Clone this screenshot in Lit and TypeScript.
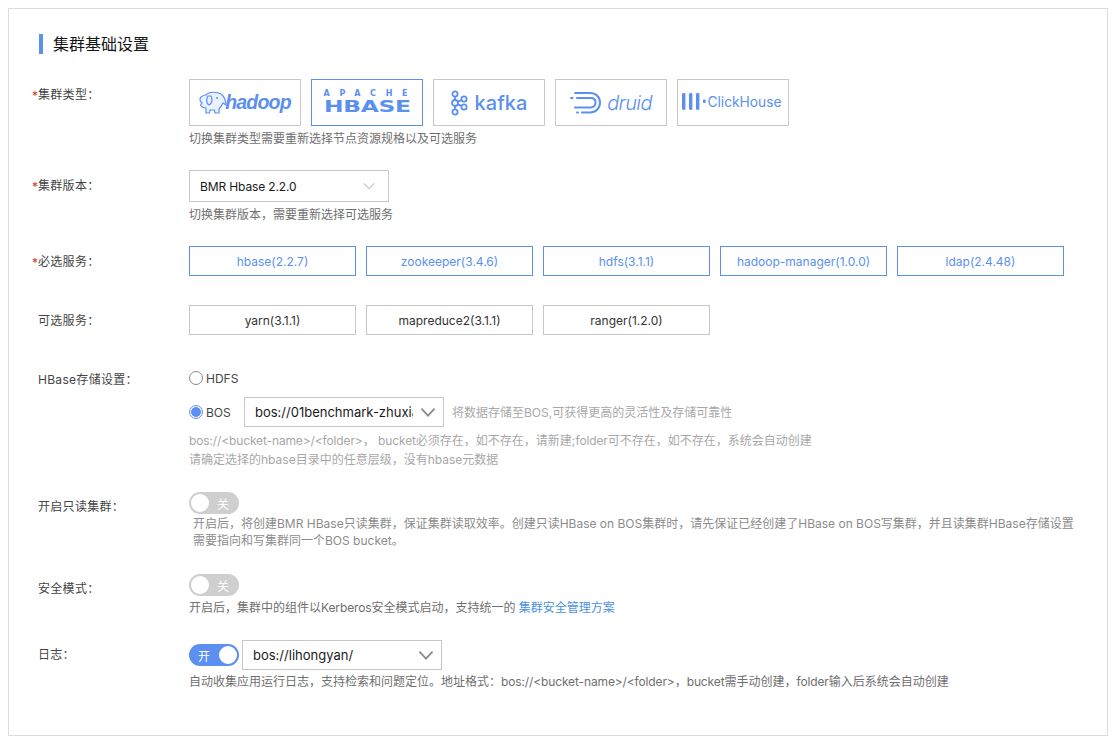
import { LitElement, html, css, svg } from "lit";
import { customElement } from "lit/decorators.js";

const chevron = (size = 22, w = 1.6, color = "#8a8a8a") => html`<svg class="chev" width=${size} height=${size * 0.6} viewBox="0 0 22 13" fill="none" stroke=${color} stroke-width=${w}><path d="M3 2 L11 10.5 L19 2"/></svg>`;

const elephant = svg`<svg class="ele" width="28" height="24" viewBox="0 0 28 24" fill="#eaf1fd" stroke="#5b8ff0" stroke-width="1.2" stroke-linejoin="round"><path d="M7 4 C10 0.500 18 0.500 22 3 C25 5 27 10 27 14 L24 12 C23 14 22 16 20 18 L20 22 L16 22 L15.500 19 L11 19 L10.500 22 L7 22 L7 17 C4 17 2.500 16 1.500 14 L3 12 C1 11 0.500 8 1.500 6.500 C3 5 5 4 7 4 Z"/><path d="M9 5 C7 8 7 12 10 14 C13 13 14 8 12 5 Z" fill="none"/><circle cx="18" cy="7" r="1" fill="#5b8ff0" stroke="none"/></svg>`;

@customElement("app-root")
export class AppRoot extends LitElement {
  static styles = css`
    :host {
      display: block;
      width: 1113px;
      height: 745px;
      box-sizing: border-box;
      padding: 8px 5px 9px 8px;
      background: #fff;
      font-family: "Inter", "Noto Sans CJK SC", sans-serif;
      font-size: 12px;
      color: #333;
    }
    * { box-sizing: border-box; }
    .card {
      height: 728px;
      border: 1px solid #dcdcdc;
      padding: 25px 0 0 23px;
    }
    .title {
      display: flex;
      align-items: center;
      height: 20px;
      margin-left: 7px;
      font-size: 16px;
      color: #151515;
      gap: 10px;
      margin-bottom: 25px;
    }
    .title i { width: 4px; height: 20px; background: #5b8ff0; display: block; }
    .title span { position: relative; top: -1px; }
    .row { display: grid; grid-template-columns: 157px 1fr; }
    .label {
      position: relative;
      padding-left: 6px;
      line-height: 18px;
      color: #444;
      letter-spacing: .3px;
    }
    .req::before {
      content: "*";
      position: absolute;
      left: 0;
      color: #d0342c;
      font-size: 12px;
    }
    .t6 { padding-top: 6px; }
    .t7 { padding-top: 7px; }
    .t7.req::before { top: 8px; }
    .l30 { line-height: 30px; padding-top: 1px; height: 30px; }
    .l30.req::before { top: 2px; }
    .flex { display: flex; align-items: center; }
    .gap10 { gap: 10px; }
    .logo {
      width: 112px;
      height: 47px;
      border: 1px solid #c8c8c8;
      display: flex;
      align-items: center;
      justify-content: center;
      color: #5b8ff0;
      overflow: hidden;
    }
    .logo.on { border-color: #5b8ff0; }
    .logo.nudge { padding: 0 2px 2px 0; }
    .ele { margin-right: -2px; flex: none; }
    .hadoop { font: italic 700 19.500px "Liberation Sans", sans-serif; letter-spacing: -.8px; }
    .hbase { display: flex; flex-direction: column; width: 85px; font-family: "DejaVu Sans", sans-serif; margin: -1px 0 0 -2px; }
    .hbase small { font-size: 8px; line-height: 8px; font-weight: 700; letter-spacing: 9.700px; white-space: nowrap; }
    .hbase b { font-size: 16px; line-height: 15px; font-weight: 700; transform: scaleX(1.46); transform-origin: left; display: block; width: 58px; letter-spacing: -.2px; margin-top: 1px; }
    .kafka { font: 500 20px "Inter", sans-serif; margin-left: 6px; letter-spacing: .1px; }
    .druid { font: italic 300 20px "Inter", sans-serif; margin-left: 5px; letter-spacing: -.6px; }
    .ch { font: 400 13.800px "Inter", sans-serif; margin-left: 1px; }
    .desc { color: #6f6f6f; line-height: 18px; }
    .hint { color: #a8a8a8; line-height: 19px; }
    .lat { letter-spacing: -.13px; }
    .select {
      height: 32px;
      width: 200px;
      border: 1px solid #c8c8c8;
      display: flex;
      align-items: center;
      justify-content: space-between;
      padding-left: 10px;
      padding-right: 12px;
      color: #1a1a1a;
    }
    .select span { white-space: nowrap; }
    .select.big { font-size: 13px; height: 30px; padding-left: 10px; padding-right: 6px; }
    .select.big span.clip { width: 158px; overflow: hidden; }
    .svc {
      width: 167px;
      height: 30px;
      border: 1px solid #c8c8c8;
      display: flex;
      align-items: center;
      justify-content: center;
      color: #333;
    }
    .svc.on { border-color: #5b8ff0; color: #5b8ff0; }
    .radio {
      width: 14px;
      height: 14px;
      border-radius: 50%;
      border: 1px solid #888;
      display: block;
      flex: none;
    }
    .radio.on { border-color: #5b8ff0; background: radial-gradient(circle, #5b8ff0 0 4.600px, #fff 5.200px); }
    .opt { display: flex; align-items: center; gap: 3px; color: #444; height: 20px; }
    .opt.bos { width: 55px; }
    .bosrow { margin-top: 9px; }
    .aside { margin-left: 8px; }
    .sw {
      width: 50px;
      height: 22px;
      border-radius: 11px;
      background: #cfcfcf;
      display: flex;
      align-items: center;
      justify-content: flex-end;
      padding: 0 10px 0 0;
      color: #fff;
      position: relative;
      flex: none;
    }
    .sw::before {
      content: "";
      position: absolute;
      left: 2px;
      top: 2px;
      width: 18px;
      height: 18px;
      border-radius: 50%;
      background: #fff;
    }
    .sw.on { background: #5b8ff0; justify-content: flex-start; padding: 0 0 0 9px; }
    .sw.on::before { left: 30px; }
    a { color: #4a90e2; text-decoration: none; }
    .r1 { margin-bottom: 22px; }
    .r2 { margin-bottom: 22px; }
    .r3 { margin-bottom: 29px; }
    .r4 { margin-bottom: 33px; }
    .r5 { margin-bottom: 23px; }
    .r6 { margin-bottom: 25px; }
    .r7 { margin-bottom: 23px; }
    .mt4 { margin-top: 4px; }
    .mt3 { margin-top: 3px; }
    .inset { padding: 1px 0 0 4px; width: 890px; line-height: 17px; color: #8c8c8c; }
    .log-label { line-height: 30px; }
    .log-row { gap: 3px; }
    .top2 { padding-top: 3px; }
  `;

  render() {
    const req = ["hbase(2.2.7)", "zookeeper(3.4.6)", "hdfs(3.1.1)", "hadoop-manager(1.0.0)", "ldap(2.4.48)"];
    const opt = ["yarn(3.1.1)", "mapreduce2(3.1.1)", "ranger(1.2.0)"];
    return html`<div class="card">
      <div class="title"><i></i><span>集群基础设置</span></div>

      <div class="row r1">
        <div class="label req t7">集群类型：</div>
        <div>
          <div class="flex gap10">
            <div class="logo">${elephant}<span class="hadoop">hadoop</span></div>
            <div class="logo on"><div class="hbase"><small>APACHE</small><b>HBASE</b></div></div>
            <div class="logo">
              <svg width="18" height="26" viewBox="0 0 18 26" fill="none" stroke="#5b8ff0" stroke-width="1.8"><circle cx="5" cy="4" r="2.6"/><circle cx="5" cy="13" r="3"/><circle cx="5" cy="22" r="2.6"/><circle cx="14" cy="9" r="2.6"/><circle cx="14" cy="17" r="2.6"/><path d="M5 6.6V10M5 16v3.4M7.6 11.6l4-1.4M7.6 14.4l4 1.4"/></svg>
              <span class="kafka">kafka</span>
            </div>
            <div class="logo">
              <svg width="32" height="24" viewBox="0 0 32 24" fill="none" stroke="#5b8ff0" stroke-width="2" stroke-linecap="round"><path d="M5 2h15c6 0 10 4 10 9.500s-4 10-10 10H12"/><path d="M7 7h14c3 0 4.500 2 4.500 4.500S24 16.500 21 16.500H5"/><path d="M1 7h1.500M7 21.500h1"/></svg>
              <span class="druid">druid</span>
            </div>
            <div class="logo nudge">
              <svg width="24" height="18" viewBox="0 0 24 18" fill="#5b8ff0"><rect x="0" y="0" width="3.400" height="17" rx="1.400"/><rect x="7" y="0" width="3.400" height="17" rx="1.400"/><rect x="14" y="0" width="3.400" height="17" rx="1.400"/><rect x="21" y="6.500" width="2.600" height="3.500" rx=".8"/></svg>
              <span class="ch">ClickHouse</span>
            </div>
          </div>
          <div class="desc mt4">切换集群类型需要重新选择节点资源规格以及可选服务</div>
        </div>
      </div>

      <div class="row r2">
        <div class="label req t7">集群版本：</div>
        <div>
          <div class="select"><span class="lat">BMR Hbase 2.2.0</span>${chevron(14, 1.4, "#a0a0a0")}</div>
          <div class="desc mt4">切换集群版本，需要重新选择可选服务</div>
        </div>
      </div>

      <div class="row r3">
        <div class="label req l30">必选服务：</div>
        <div class="flex gap10">${req.map((s) => html`<div class="svc on">${s}</div>`)}</div>
      </div>

      <div class="row r4">
        <div class="label l30">可选服务：</div>
        <div class="flex gap10">${opt.map((s) => html`<div class="svc">${s}</div>`)}</div>
      </div>

      <div class="row r5">
        <div class="label top2">HBase存储设置：</div>
        <div>
          <div class="opt"><i class="radio"></i>HDFS</div>
          <div class="flex bosrow">
            <div class="opt bos"><i class="radio on"></i>BOS</div>
            <div class="select big"><span class="clip">bos://01benchmark-zhuxiaoyan</span>${chevron(18, 2.2, "#8a8a8a")}</div>
            <div class="hint aside">将数据存储至BOS,可获得更高的灵活性及存储可靠性</div>
          </div>
          <div class="hint mt4"><span class="lat">bos://&lt;bucket-name&gt;/&lt;folder&gt;</span>， <span class="lat">bucket</span>必须存在，如不存在，请新建;<span class="lat">folder</span>可不存在，如不存在，系统会自动创建<br />请确定选择的hbase目录中的任意层级，没有hbase元数据</div>
        </div>
      </div>

      <div class="row r6">
        <div class="label t6">开启只读集群：</div>
        <div>
          <div class="sw">关</div>
          <div class="inset">开启后，将创建BMR HBase只读集群，保证集群读取效率。创建只读HBase on BOS集群时，请先保证已经创建了HBase on BOS写集群，并且读集群HBase存储设置需要指向和写集群同一个BOS bucket。</div>
        </div>
      </div>

      <div class="row r7">
        <div class="label t6">安全模式：</div>
        <div>
          <div class="sw">关</div>
          <div class="desc mt3">开启后，集群中的组件以<span class="lat">Kerberos</span>安全模式启动，支持统一的 <a href="#">集群安全管理方案</a></div>
        </div>
      </div>

      <div class="row">
        <div class="label log-label">日志：</div>
        <div>
          <div class="flex log-row">
            <div class="sw on">开</div>
            <div class="select big"><span>bos://lihongyan/</span>${chevron(18, 2.2, "#8a8a8a")}</div>
          </div>
          <div class="desc mt3">自动收集应用运行日志，支持检索和问题定位。地址格式：<span class="lat">bos://&lt;bucket-name&gt;/&lt;folder&gt;</span>，<span class="lat">bucket</span>需手动创建，<span class="lat">folder</span>输入后系统会自动创建</div>
        </div>
      </div>
    </div>`;
  }
}
